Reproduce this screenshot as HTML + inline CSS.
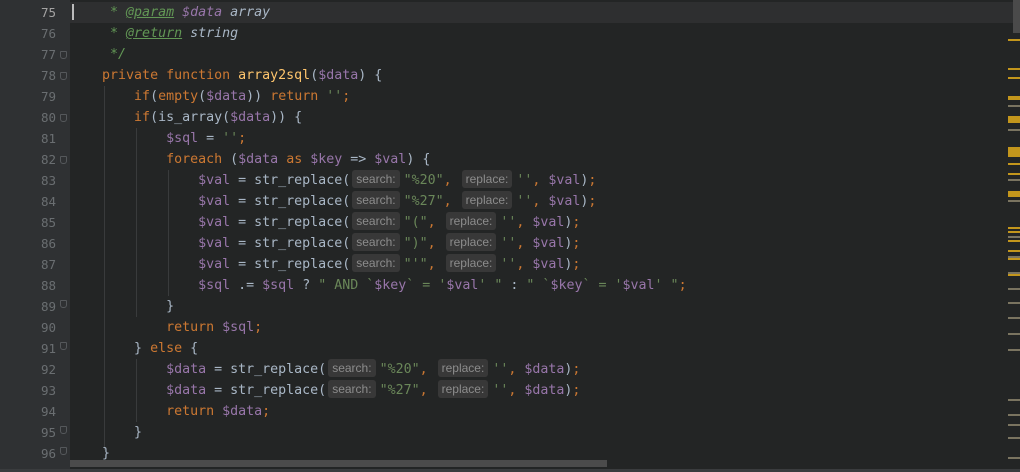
<!DOCTYPE html>
<html><head><meta charset="utf-8"><style>
body{margin:0;width:1020px;height:472px;overflow:hidden;background:#232525;position:relative;font-family:"DejaVu Sans Mono","Liberation Mono",monospace;}
.g{position:absolute;left:0;top:0;width:70px;height:472px;background:#2f3133;}
.cur{position:absolute;left:70px;top:2px;width:950px;height:21px;background:#2e2f30;}
.n{position:absolute;left:0;width:56px;text-align:right;font-size:12.5px;color:#6a6e71;line-height:21px;}
.l{position:absolute;left:70px;white-space:pre;font-size:13.3px;line-height:21px;color:#a9b7c6;}
.k{color:#cc7832}.v{color:#9876aa}.s{color:#6a8759}.f{color:#ffc66d}.c{color:#629755;font-style:italic}.ci{color:#629755;font-style:italic;text-decoration:underline}.dv{color:#9876aa;font-style:italic}.dt{color:#a9b7c6;font-style:italic}
.h{display:inline-block;font-family:"Liberation Sans",sans-serif;font-size:12px;line-height:18px;color:#8c8c8c;background:#383838;border-radius:3px;padding:0 4px;margin:0 4px 0 2px;vertical-align:1px}
.ig{position:absolute;width:1px;background:#393b3c}
.fm{position:absolute;left:60px;width:7px;height:8px;border:1px solid #55585b;border-radius:1px 1px 3px 3px;box-sizing:border-box}
.mk{position:absolute;left:1008px;width:12px;height:2px;background:#c3961c}
.mg{position:absolute;left:1008px;width:12px;height:2px;background:#7a7460}
</style></head><body>
<div class="g"></div>
<div class="cur"></div>
<div style="position:absolute;left:72px;top:4px;width:2px;height:16px;background:#bbb"></div>
<div style="position:absolute;left:1013px;top:0;width:7px;height:33px;background:#4a4a4a"></div>
<div class="ig" style="left:104px;top:86px;height:364px"></div>
<div class="ig" style="left:136px;top:128px;height:189px"></div>
<div class="ig" style="left:168px;top:170px;height:126px"></div>
<div class="ig" style="left:136px;top:359px;height:63px"></div>
<div class="fm" style="top:51px"></div><div class="fm" style="top:72px"></div><div class="fm" style="top:114px"></div><div class="fm" style="top:156px"></div><div class="fm" style="top:300px"></div><div class="fm" style="top:342px"></div><div class="fm" style="top:426px"></div><div class="fm" style="top:447px"></div>
<div class="n" style="top:2px;color:#a4a3a3">75</div><div class="n" style="top:23px">76</div><div class="n" style="top:44px">77</div><div class="n" style="top:65px">78</div><div class="n" style="top:86px">79</div><div class="n" style="top:107px">80</div><div class="n" style="top:128px">81</div><div class="n" style="top:149px">82</div><div class="n" style="top:170px">83</div><div class="n" style="top:191px">84</div><div class="n" style="top:212px">85</div><div class="n" style="top:233px">86</div><div class="n" style="top:254px">87</div><div class="n" style="top:275px">88</div><div class="n" style="top:296px">89</div><div class="n" style="top:317px">90</div><div class="n" style="top:338px">91</div><div class="n" style="top:359px">92</div><div class="n" style="top:380px">93</div><div class="n" style="top:401px">94</div><div class="n" style="top:422px">95</div><div class="n" style="top:443px">96</div>
<div class="l" style="top:2px"><span class="c">     * </span><span class="ci">@param</span> <span class="dv">$data</span> <span class="dt">array</span></div>
<div class="l" style="top:23px"><span class="c">     * </span><span class="ci">@return</span> <span class="dt">string</span></div>
<div class="l" style="top:44px"><span class="c">     */</span></div>
<div class="l" style="top:65px">    <span class="k">private function </span><span class="f">array2sql</span>(<span class="v">$data</span>) {</div>
<div class="l" style="top:86px">        <span class="k">if</span>(<span class="k">empty</span>(<span class="v">$data</span>)) <span class="k">return </span><span class="s">''</span><span class="k">;</span></div>
<div class="l" style="top:107px">        <span class="k">if</span>(is_array(<span class="v">$data</span>)) {</div>
<div class="l" style="top:128px">            <span class="v">$sql</span> = <span class="s">''</span><span class="k">;</span></div>
<div class="l" style="top:149px">            <span class="k">foreach </span>(<span class="v">$data</span> <span class="k">as </span><span class="v">$key</span> =&gt; <span class="v">$val</span>) {</div>
<div class="l" style="top:170px">                <span class="v">$val</span> = str_replace(<span class="h">search:</span><span class="s">"%20"</span><span class="k">,</span> <span class="h">replace:</span><span class="s">''</span><span class="k">, </span><span class="v">$val</span>)<span class="k">;</span></div>
<div class="l" style="top:191px">                <span class="v">$val</span> = str_replace(<span class="h">search:</span><span class="s">"%27"</span><span class="k">,</span> <span class="h">replace:</span><span class="s">''</span><span class="k">, </span><span class="v">$val</span>)<span class="k">;</span></div>
<div class="l" style="top:212px">                <span class="v">$val</span> = str_replace(<span class="h">search:</span><span class="s">"("</span><span class="k">,</span> <span class="h">replace:</span><span class="s">''</span><span class="k">, </span><span class="v">$val</span>)<span class="k">;</span></div>
<div class="l" style="top:233px">                <span class="v">$val</span> = str_replace(<span class="h">search:</span><span class="s">")"</span><span class="k">,</span> <span class="h">replace:</span><span class="s">''</span><span class="k">, </span><span class="v">$val</span>)<span class="k">;</span></div>
<div class="l" style="top:254px">                <span class="v">$val</span> = str_replace(<span class="h">search:</span><span class="s">"'"</span><span class="k">,</span> <span class="h">replace:</span><span class="s">''</span><span class="k">, </span><span class="v">$val</span>)<span class="k">;</span></div>
<div class="l" style="top:275px">                <span class="v">$sql</span> .= <span class="v">$sql</span> ? <span class="s">" AND `</span><span class="v">$key</span><span class="s">` = '</span><span class="v">$val</span><span class="s">' "</span> : <span class="s">" `</span><span class="v">$key</span><span class="s">` = '</span><span class="v">$val</span><span class="s">' "</span><span class="k">;</span></div>
<div class="l" style="top:296px">            }</div>
<div class="l" style="top:317px">            <span class="k">return </span><span class="v">$sql</span><span class="k">;</span></div>
<div class="l" style="top:338px">        } <span class="k">else </span>{</div>
<div class="l" style="top:359px">            <span class="v">$data</span> = str_replace(<span class="h">search:</span><span class="s">"%20"</span><span class="k">,</span> <span class="h">replace:</span><span class="s">''</span><span class="k">, </span><span class="v">$data</span>)<span class="k">;</span></div>
<div class="l" style="top:380px">            <span class="v">$data</span> = str_replace(<span class="h">search:</span><span class="s">"%27"</span><span class="k">,</span> <span class="h">replace:</span><span class="s">''</span><span class="k">, </span><span class="v">$data</span>)<span class="k">;</span></div>
<div class="l" style="top:401px">            <span class="k">return </span><span class="v">$data</span><span class="k">;</span></div>
<div class="l" style="top:422px">        }</div>
<div class="l" style="top:443px">    }</div>
<div style="position:absolute;left:70px;top:460px;width:537px;height:7px;background:#4b4b4b"></div>
<div style="position:absolute;left:0;top:469px;width:1020px;height:3px;background:#3a3c3e"></div>
<div class="mk" style="top:39px"></div><div class="mk" style="top:68px"></div><div class="mk" style="top:77px"></div><div class="mk" style="top:96px;height:4px"></div><div class="mg" style="top:105px"></div><div class="mk" style="top:116px;height:7px"></div><div class="mg" style="top:129px"></div><div class="mk" style="top:147px;height:10px"></div><div class="mk" style="top:163px"></div><div class="mk" style="top:173px"></div><div class="mg" style="top:179px"></div><div class="mk" style="top:191px;height:6px"></div><div class="mg" style="top:200px"></div><div class="mk" style="top:227px"></div><div class="mk" style="top:231px"></div><div class="mg" style="top:236px"></div><div class="mk" style="top:240px"></div><div class="mk" style="top:250px"></div><div class="mg" style="top:256px"></div><div class="mk" style="top:258px"></div><div class="mg" style="top:272px"></div><div class="mk" style="top:274px"></div><div class="mg" style="top:288px"></div><div class="mg" style="top:302px"></div><div class="mg" style="top:317px"></div><div class="mg" style="top:333px"></div><div class="mg" style="top:349px"></div><div class="mg" style="top:399px"></div><div class="mg" style="top:414px"></div><div class="mg" style="top:424px"></div><div class="mg" style="top:437px"></div><div class="mg" style="top:457px"></div>
</body></html>
